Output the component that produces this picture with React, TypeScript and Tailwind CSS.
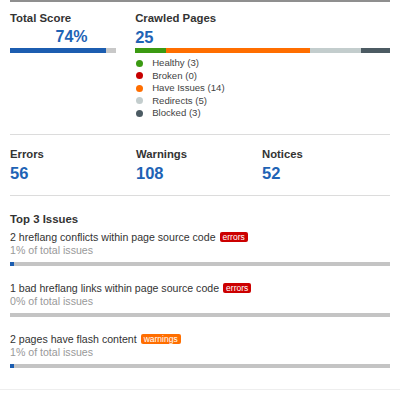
const legend = [
  { label: "Healthy (3)", color: "bg-[#3b9a12]" },
  { label: "Broken (0)", color: "bg-[#c70000]" },
  { label: "Have Issues (14)", color: "bg-[#ff6e00]" },
  { label: "Redirects (5)", color: "bg-[#c3cdcd]" },
  { label: "Blocked (3)", color: "bg-[#4c5b63]" },
];

const issues = [
  { text: "2 hreflang conflicts within page source code", tag: "errors", tagColor: "bg-[#cc0000]", pct: "1%", fill: true },
  { text: "1 bad hreflang links within page source code", tag: "errors", tagColor: "bg-[#cc0000]", pct: "0%", fill: false },
  { text: "2 pages have flash content", tag: "warnings", tagColor: "bg-[#ff6e00]", pct: "1%", fill: true },
];

function Stat({ label, value }: { label: string; value: string }) {
  return (
    <div className="w-[126px]">
      <div className="text-[11.3px] font-bold leading-[14px] text-[#333]">{label}</div>
      <div className="mt-[2px] text-[16.5px] font-bold leading-[20px] text-[#1e63b5]">{value}</div>
    </div>
  );
}

export default function App() {
  return (
    <div className="h-[400px] w-[400px] bg-white font-['Liberation_Sans',Arial,sans-serif]">
      <div className="mx-[10px] h-[2px] bg-[#8f8f8f]" />
      <div className="flex px-[10px] pt-[9px]">
        <div className="w-[107px]">
          <div className="text-[11.4px] font-bold leading-[14px] text-[#333]">Total Score</div>
          <div className="mt-[2px] pl-[17px] text-center text-[16px] font-bold leading-[20px] text-[#1e63b5]">74%</div>
          <div className="mt-[1px] flex h-[5px]">
            <div className="w-[96px] bg-[#1c5db0]" />
            <div className="flex-1 bg-[#c8c8c8]" />
          </div>
        </div>
        <div className="ml-[19px] w-[257px]">
          <div className="text-[11.4px] font-bold leading-[14px] text-[#333]">Crawled Pages</div>
          <div className="mt-[2px] text-[16.5px] font-bold leading-[20px] text-[#1e63b5]">25</div>
          <div className="mt-[1px] flex h-[5px]">
            <div className="w-[31px] bg-[#3b9a12]" />
            <div className="w-[144px] bg-[#ff6e00]" />
            <div className="w-[51px] bg-[#c3cdcd]" />
            <div className="flex-1 bg-[#4c5b63]" />
          </div>
          <ul className="mt-[4px]">
            {legend.map((l) => (
              <li key={l.label} className="flex h-[12.5px] items-center text-[9.6px] text-[#444]">
                <span className={`ml-[1px] mr-[9px] h-[7px] w-[7px] rounded-full ${l.color}`} />
                {l.label}
              </li>
            ))}
          </ul>
        </div>
      </div>
      <div className="mx-[10px] mt-[14px] h-px bg-[#dcdcdc]" />
      <div className="flex px-[10px] pt-[12px]">
        <Stat label="Errors" value="56" />
        <Stat label="Warnings" value="108" />
        <Stat label="Notices" value="52" />
      </div>
      <div className="mx-[10px] mt-[12px] h-px bg-[#dcdcdc]" />
      <div className="px-[10px] pt-[16px]">
        <div className="text-[11.4px] font-bold leading-[14px] text-[#333]">Top 3 Issues</div>
        {issues.map((it, i) => (
          <div key={i} className={i === 0 ? "mt-[4px]" : "mt-[15px]"}>
            <div className="flex items-center text-[10.6px] leading-[14px] text-[#333]">
              {it.text}
              <span className={`ml-[4px] rounded-[2px] px-[3px] text-[8.5px] leading-[10px] text-white ${it.tagColor}`}>
                {it.tag}
              </span>
            </div>
            <div className="text-[10.6px] leading-[13px] text-[#999]">{it.pct} of total issues</div>
            <div className="mt-[5px] flex h-[4px] bg-[#c4c4c4]">
              {it.fill && <div className="w-[4px] bg-[#1c5db0]" />}
            </div>
          </div>
        ))}
      </div>
      <div className="mt-[21px] h-px bg-[#eeeeee]" />
    </div>
  );
}
